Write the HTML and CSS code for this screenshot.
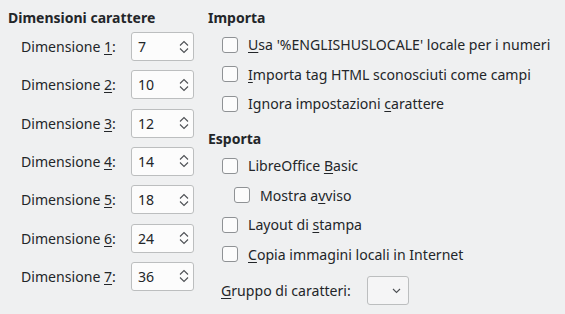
FILE: index.html
```html
<!DOCTYPE html>
<html lang="it">

<head>
    <meta charset="UTF-8">
    <title>Opzioni HTML</title>
    <link rel="stylesheet" href="styles.css">
</head>

<body>
    <div class="page">
        <section class="col col-sizes">
            <h3 class="group-title">Dimensioni carattere</h3>
            <div class="size-list">
                <div class="size-row">
                    <label>Dimensione <u>1</u>:</label>
                    <div class="spin"><span class="spin-value">7</span>
                        <svg class="spin-arrows" width="10" height="14" viewBox="0 0 10 14"><path d="M1 5.5 L5 1.5 L9 5.5 M1 8.5 L5 12.5 L9 8.5" /></svg>
                    </div>
                </div>
                <div class="size-row">
                    <label>Dimensione <u>2</u>:</label>
                    <div class="spin"><span class="spin-value">10</span>
                        <svg class="spin-arrows" width="10" height="14" viewBox="0 0 10 14"><path d="M1 5.5 L5 1.5 L9 5.5 M1 8.5 L5 12.5 L9 8.5" /></svg>
                    </div>
                </div>
                <div class="size-row">
                    <label>Dimensione <u>3</u>:</label>
                    <div class="spin"><span class="spin-value">12</span>
                        <svg class="spin-arrows" width="10" height="14" viewBox="0 0 10 14"><path d="M1 5.5 L5 1.5 L9 5.5 M1 8.5 L5 12.5 L9 8.5" /></svg>
                    </div>
                </div>
                <div class="size-row">
                    <label>Dimensione <u>4</u>:</label>
                    <div class="spin"><span class="spin-value">14</span>
                        <svg class="spin-arrows" width="10" height="14" viewBox="0 0 10 14"><path d="M1 5.5 L5 1.5 L9 5.5 M1 8.5 L5 12.5 L9 8.5" /></svg>
                    </div>
                </div>
                <div class="size-row">
                    <label>Dimensione <u>5</u>:</label>
                    <div class="spin"><span class="spin-value">18</span>
                        <svg class="spin-arrows" width="10" height="14" viewBox="0 0 10 14"><path d="M1 5.5 L5 1.5 L9 5.5 M1 8.5 L5 12.5 L9 8.5" /></svg>
                    </div>
                </div>
                <div class="size-row">
                    <label>Dimensione <u>6</u>:</label>
                    <div class="spin"><span class="spin-value">24</span>
                        <svg class="spin-arrows" width="10" height="14" viewBox="0 0 10 14"><path d="M1 5.5 L5 1.5 L9 5.5 M1 8.5 L5 12.5 L9 8.5" /></svg>
                    </div>
                </div>
                <div class="size-row">
                    <label>Dimensione <u>7</u>:</label>
                    <div class="spin"><span class="spin-value">36</span>
                        <svg class="spin-arrows" width="10" height="14" viewBox="0 0 10 14"><path d="M1 5.5 L5 1.5 L9 5.5 M1 8.5 L5 12.5 L9 8.5" /></svg>
                    </div>
                </div>
            </div>
        </section>

        <section class="col col-options">
            <h3 class="group-title">Importa</h3>
            <div class="check-row"><span class="check"></span><span><u>U</u>sa '%ENGLISHUSLOCALE' locale per i numeri</span></div>
            <div class="check-row"><span class="check"></span><span><u>I</u>mporta tag HTML sconosciuti come campi</span></div>
            <div class="check-row"><span class="check"></span><span>Ignora impostazioni <u>c</u>arattere</span></div>

            <h3 class="group-title group-gap">Esporta</h3>
            <div class="check-row"><span class="check"></span><span>LibreOffice <u>B</u>asic</span></div>
            <div class="check-row check-sub"><span class="check"></span><span>Mostra a<u>v</u>viso</span></div>
            <div class="check-row"><span class="check"></span><span>Layout di <u>s</u>tampa</span></div>
            <div class="check-row"><span class="check"></span><span><u>C</u>opia immagini locali in Internet</span></div>

            <div class="charset-row">
                <label><u>G</u>ruppo di caratteri:</label>
                <div class="combo">
                    <svg width="9" height="6" viewBox="0 0 9 6"><path d="M1 1 L4.5 4.5 L8 1" /></svg>
                </div>
            </div>
        </section>
    </div>
</body>

</html>
```

FILE: styles.css
```css
html,
body {
    margin: 0;
    background: #eff0f1;
}

body {
    font-family: "Noto Sans", sans-serif;
    font-size: 14.1px;
    color: #232629;
}

u {
    text-underline-offset: 2px;
}

.page {
    display: flex;
    gap: 14px;
    padding: 8px 0 0 8px;
}

.group-title {
    margin: 0 0 2px 0;
    font-size: 14px;
    font-weight: bold;
    line-height: 20px;
}

/* left column */

.col-sizes {
    width: 186px;
}

.size-list {
    display: flex;
    flex-direction: column;
    gap: 9.33px;
    margin-top: 4px;
}

.size-row {
    display: flex;
    align-items: center;
    justify-content: space-between;
    padding-left: 13px;
}

.spin {
    box-sizing: border-box;
    display: flex;
    align-items: center;
    justify-content: space-between;
    width: 63px;
    height: 29px;
    padding: 0 4px 0 6px;
    background: #fcfcfc;
    border: 1px solid #bcbebf;
    border-radius: 3px;
}

.spin-arrows path,
.combo path {
    fill: none;
    stroke: #4d5054;
    stroke-width: 1.1;
}

/* right column */

.col-options {
    flex: 1;
}

.check-row {
    display: flex;
    align-items: center;
    gap: 10px;
    height: 29.5px;
    padding-left: 14px;
}

.check-row.check-sub {
    padding-left: 26px;
}

.check {
    box-sizing: border-box;
    width: 16px;
    height: 16px;
    background: #fcfcfc;
    border: 1px solid #8f9295;
    border-radius: 3px;
}

.group-gap {
    margin-top: 10.5px;
}

.charset-row {
    display: flex;
    align-items: center;
    gap: 16px;
    margin-top: 7px;
    padding-left: 13px;
}

.combo {
    box-sizing: border-box;
    display: flex;
    align-items: center;
    justify-content: flex-end;
    width: 42px;
    height: 29px;
    padding-right: 7px;
    background: #f5f5f6;
    border: 1px solid #bcbebf;
    border-radius: 3px;
}
```
